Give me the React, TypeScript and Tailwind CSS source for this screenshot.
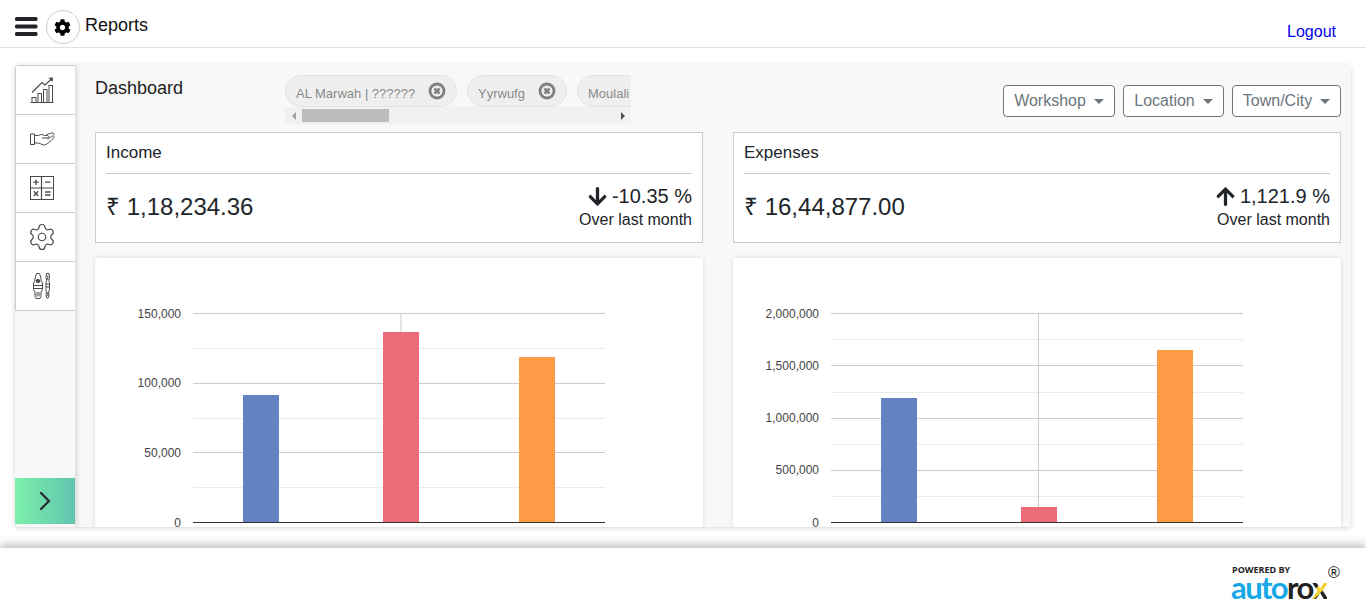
import React from "react";
import { FaCog, FaArrowDown, FaArrowUp } from "react-icons/fa";
import { ChevronRight, Settings } from "lucide-react";

const GrowthIcon = () => (
  <svg width="24" height="26" viewBox="0 0 24 26" fill="none" stroke="#4a4a4a" strokeWidth="1">
    <path d="M0.5 25.5h23" />
    <rect x="2" y="20.5" width="4" height="5" />
    <rect x="8" y="16.5" width="3.5" height="9" />
    <rect x="13.5" y="12.5" width="3.5" height="13" />
    <rect x="19" y="8.5" width="3.5" height="17" />
    <path d="M2 15.5 L12 5.5 L15 8 L22 1.5" strokeWidth="1.2" />
    <path d="M18.5 0.8 L23 0.5 L22.5 5 Z" fill="#4a4a4a" stroke="none" />
  </svg>
);

const HandIcon = () => (
  <svg width="25" height="14" viewBox="0 0 25 14" fill="none" stroke="#4a4a4a" strokeWidth="1" strokeLinejoin="round">
    <rect x="0.5" y="2" width="4" height="10.5" />
    <path d="M4.5 3.5 H8.5 C10.5 2 12.5 2.5 14.5 3.5 H17 C19 3.5 19 6 17 6 H12" />
    <path d="M4.5 11 H8.5 L13.5 13 C16.5 13 20.5 9.5 24 5.5 C24.5 4 23 3.5 21.5 4.5 L17.5 7" />
    <path d="M16 3 C18 2 21 0.8 23 1 L24.3 3" />
  </svg>
);

const CalcIcon = () => (
  <svg width="24" height="24" viewBox="0 0 24 24" fill="none" stroke="#4a4a4a" strokeWidth="1">
    <rect x="0.5" y="0.5" width="23" height="23" />
    <path d="M11.5 0.5v23M0.5 12h23" strokeWidth="1.2" />
    <path d="M6 3.5v5.5M3.3 6.2h5.4M15 6.2h5.5M15 16h5.5M15 19h5.5M3.8 15.2l4.4 4.8M8.2 15.2l-4.4 4.8" strokeWidth="1.3" />
  </svg>
);

const PlugsIcon = () => (
  <svg width="18" height="26" viewBox="0 0 18 26" fill="none" stroke="#4a4a4a" strokeWidth="1">
    <path d="M3.5 0.5h3L8 5v3l1.5 2v6.5L8 19v4.5l-1 2H3l-1-2V19L0.5 16.5V10L2 8V5z" />
    <circle cx="5" cy="8" r="1.7" fill="#4a4a4a" />
    <path d="M0.5 12.5h9M0.5 15.5h9M4 19v4.5M6 19v4.5" />
    <path d="M13.5 0.5h2.5l.5 4-.7 3 .7 2v7l-.7 1.5v5l-.6 2h-1.4l-.6-2v-5L13 16.5v-7l.7-2-.7-3z" />
    <path d="M13 11h3.5M13 14h3.5M14.8 2.5v4.5M14.8 19v4" />
  </svg>
);

const ChipClose = () => (
  <svg width="18" height="18" viewBox="0 0 18 18" fill="none" stroke="#808080">
    <circle cx="9" cy="9" r="7" strokeWidth="2.8" />
    <path d="M6.5 6.5l5 5M11.5 6.5l-5 5" strokeWidth="2.6" />
  </svg>
);

const Chip = ({ label, w, close = true }: { label: string; w: string; close?: boolean }) => (
  <div className={`${w} h-[32px] shrink-0 flex items-center justify-between pl-[10px] pr-[10px] rounded-[16px] border border-[#e3e3e3] bg-[#efefef] text-[13px] text-[#8a8a8a]`}>
    <span className="whitespace-nowrap pt-[5px]">{label}</span>
    {close && <ChipClose />}
  </div>
);

const Caret = () => <span className="ml-[8px] inline-block w-0 h-0 border-x-[5px] border-x-transparent border-t-[5px] border-t-[#6c757d]" />;

const Drop = ({ label, w }: { label: string; w: string }) => (
  <div className={`${w} h-[32px] flex items-center justify-center rounded-[4px] border border-[#6c757d] bg-white text-[16px] text-[#6c757d]`}>
    {label}
    <Caret />
  </div>
);

const Stat = ({ title, value, pct, up }: { title: string; value: string; pct: string; up?: boolean }) => (
  <div className="flex-1 h-[111px] border border-[#cccccc] bg-white px-[10px] text-[#212529]">
    <div className="h-[41px] border-b border-[#cccccc] flex items-center text-[17px] pb-[1px]">{title}</div>
    <div className="h-[68px] flex items-center justify-between">
      <div className="text-[24px] leading-none mt-[-3px]">{value}</div>
      <div className="text-right">
        <div className="flex items-center justify-end gap-[4px] text-[20px] leading-[24px]">
          {up ? <FaArrowUp size={21} /> : <FaArrowDown size={21} />}
          <span>{pct}</span>
        </div>
        <div className="text-[16px] leading-[24px]">Over last month</div>
      </div>
    </div>
  </div>
);

type ChartProps = {
  labels: { y: number; t: string; ty: number }[];
  minor: number[];
  bars: { x: number; top: number; c: string }[];
  stem: { x: number; y2: number };
};

const Chart = ({ labels, minor, bars, stem }: ChartProps) => (
  <div className="flex-1 h-[269px] bg-white rounded-[2px] shadow-[0_0_5px_rgba(0,0,0,0.12)]">
    <svg width="608" height="269" viewBox="0 0 608 269" className="block">
      {minor.map((y) => (
        <line key={y} x1="98" x2="510" y1={y} y2={y} stroke="#ebebeb" />
      ))}
      {labels.slice(0, -1).map((l) => (
        <line key={l.y} x1="98" x2="510" y1={l.y} y2={l.y} stroke="#cccccc" />
      ))}
      <line x1={stem.x} x2={stem.x} y1="55.5" y2={stem.y2} stroke="#cccccc" />
      {bars.map((b) => (
        <rect key={b.x} x={b.x} y={b.top} width="36" height={264 - b.top} fill={b.c} />
      ))}
      <line x1="98" x2="510" y1="264.5" y2="264.5" stroke="#333333" />
      {labels.map((l) => (
        <text key={l.t} x="86" y={l.ty} textAnchor="end" fontSize="12" fill="#444444" fontFamily="'Liberation Sans', Arial, sans-serif">
          {l.t}
        </text>
      ))}
    </svg>
  </div>
);

export default function App() {
  return (
    <div className="w-[1366px] h-[612px] overflow-hidden bg-white flex flex-col font-['Liberation_Sans',Arial,sans-serif] text-[#212529]">
      <header className="h-[48px] shrink-0 border-b border-[#dee2e6] flex pl-[15px] pr-[30px]">
        <svg width="23" height="20" viewBox="0 0 23 20" className="mt-[17px]" fill="#212529">
          <rect x="0" y="0" width="22.5" height="4" rx="1.5" />
          <rect x="0" y="7.5" width="22.5" height="4" rx="1.5" />
          <rect x="0" y="15" width="22.5" height="4" rx="1.5" />
        </svg>
        <div className="ml-[8px] mt-[10px] w-[34px] h-[34px] rounded-full border border-[#cccccc] flex items-center justify-center pr-[1px] text-black">
          <FaCog size={17} />
        </div>
        <div className="ml-[5px] mt-[14px] text-[18px] leading-[22px] text-[#111]">Reports</div>
        <div className="ml-auto mt-[22px] text-[16px] leading-[20px] text-[#0000ee]">Logout</div>
      </header>

      <div className="h-[17px] shrink-0" />

      <main className="mx-[15px] h-[462px] shrink-0 flex bg-[#f8f8f8] rounded-[4px] overflow-hidden shadow-[0_1px_5px_rgba(0,0,0,0.18)]">
        <aside className="w-[60px] shrink-0 flex flex-col shadow-[2px_0_5px_rgba(0,0,0,0.13)] z-10">
          <div className="border-l border-[#cccccc] bg-white">
            {[<GrowthIcon />, <HandIcon />, <CalcIcon />, <Settings size={30} strokeWidth={0.95} color="#4a4a4a" />, <PlugsIcon />].map((icon, i) => (
              <div key={i} className={`h-[49px] border-b border-[#cccccc] flex items-center justify-center pr-[7px] ${i === 0 ? "border-t h-[50px]" : ""}`}>
                {icon}
              </div>
            ))}
          </div>
          <div className="flex-1" />
          <div className="h-[46px] mb-[3px] flex items-center justify-center bg-gradient-to-r from-[#7cf0a8] to-[#62c4b0] text-[#2d2d38]">
            <ChevronRight size={32} strokeWidth={1.8} />
          </div>
        </aside>

        <div className="flex-1 min-w-0 pl-[20px] pr-[10px] overflow-hidden">
          <div className="h-[67px] flex">
            <div className="w-[190px] pt-[11px] text-[18px] leading-[24px] text-[#222]">Dashboard</div>
            <div className="w-[346px] pt-[10px]">
              <div className="flex gap-[10px] overflow-hidden">
                <Chip label="AL Marwah | ??????" w="w-[172px]" />
                <Chip label="Yyrwufg" w="w-[100px]" />
                <Chip label="Moulali" w="w-[100px]" close={false} />
              </div>
              <div className="h-[17px] bg-[#f1f1f1] flex items-center">
                <div className="w-[17px] flex justify-center">
                  <span className="w-0 h-0 border-y-[4px] border-y-transparent border-r-[4px] border-r-[#a3a3a3]" />
                </div>
                <div className="w-[87px] h-[13px] bg-[#bdbdbd]" />
                <div className="ml-auto w-[17px] flex justify-center">
                  <span className="w-0 h-0 border-y-[4px] border-y-transparent border-l-[4px] border-l-[#505050]" />
                </div>
              </div>
            </div>
            <div className="flex-1 flex justify-end gap-[8px] pt-[20px]">
              <Drop label="Workshop" w="w-[112px]" />
              <Drop label="Location" w="w-[101px]" />
              <Drop label="Town/City" w="w-[109px]" />
            </div>
          </div>

          <div className="flex gap-[30px]">
            <Stat title="Income" value="₹ 1,18,234.36" pct="-10.35 %" />
            <Stat title="Expenses" value="₹ 16,44,877.00" pct="1,121.9 %" up />
          </div>

          <div className="flex gap-[30px] mt-[15px]">
            <Chart
              labels={[
                { y: 55.5, t: "150,000", ty: 59.5 },
                { y: 125.5, t: "100,000", ty: 128.5 },
                { y: 194.5, t: "50,000", ty: 198.5 },
                { y: 264.5, t: "0", ty: 269 },
              ]}
              minor={[90.5, 160.5, 229.5]}
              bars={[
                { x: 148, top: 137, c: "#6582c2" },
                { x: 288, top: 74, c: "#ec6d79" },
                { x: 424, top: 99, c: "#ff9a47" },
              ]}
              stem={{ x: 306, y2: 74 }}
            />
            <Chart
              labels={[
                { y: 55.5, t: "2,000,000", ty: 59.5 },
                { y: 107.5, t: "1,500,000", ty: 111.5 },
                { y: 160.5, t: "1,000,000", ty: 163.5 },
                { y: 212.5, t: "500,000", ty: 215.5 },
                { y: 264.5, t: "0", ty: 269 },
              ]}
              minor={[81.5, 134.5, 186.5, 238.5]}
              bars={[
                { x: 148, top: 140, c: "#6582c2" },
                { x: 288, top: 249, c: "#ec6d79" },
                { x: 424, top: 92, c: "#ff9a47" },
              ]}
              stem={{ x: 305.5, y2: 249 }}
            />
          </div>
        </div>
      </main>

      <div className="h-[21px] shrink-0" />

      <footer className="flex-1 bg-white shadow-[0_-3px_9px_rgba(0,0,0,0.28)] z-10 flex justify-end pr-[38px] pt-[17px]">
        <div className="relative w-[97px] h-[40px]">
          <div className="pl-[1px] font-['Open_Sans',sans-serif] font-bold text-[9px] leading-[10px] text-[#222] whitespace-nowrap">POWERED BY</div>
          <div className="font-['Lato',sans-serif] font-bold text-[31px] leading-[24px] tracking-[-1.6px] whitespace-nowrap">
            <span className="text-[#18a8e6]">auto</span>
            <span className="text-[#222]">ro</span>
            <span className="bg-[linear-gradient(135deg,#222_45%,#f5d22e_46%,#f5d22e_62%,#222_63%)] bg-clip-text text-transparent">x</span>
          </div>
          <div className="absolute left-[97px] top-[0px] text-[16px] leading-none text-[#111]">®</div>
        </div>
      </footer>
    </div>
  );
}
